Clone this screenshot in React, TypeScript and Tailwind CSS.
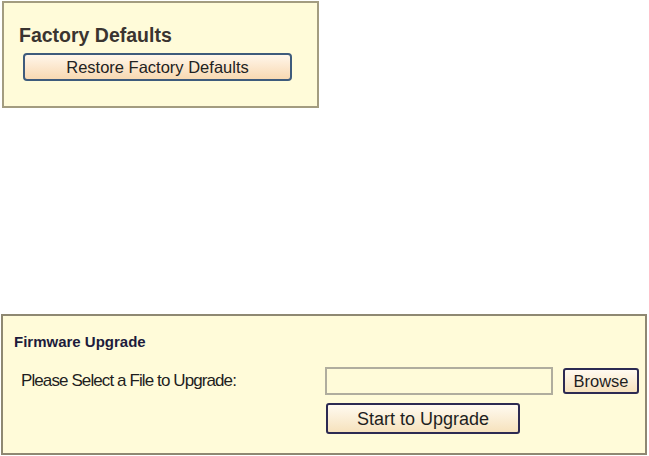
import React from 'react';

// Router admin panels: factory reset and firmware upgrade
const panelBg = 'bg-[#fffbd9]';

const App: React.FC = () => {
  return (
    <div className="w-[649px] h-[456px] bg-white font-['Liberation_Sans',Arial,sans-serif] overflow-hidden">
      {/* Factory Defaults */}
      <div className={`ml-[2px] mt-[1px] w-[317px] h-[107px] border-2 border-[#a39c80] ${panelBg} pl-[15px] pt-[20px]`}>
        <h2 className="text-[19.5px] leading-[24px] font-bold text-[#3a3430]">Factory Defaults</h2>
        <button
          type="button"
          className="mt-[6px] ml-[4px] w-[269px] h-[28px] rounded-[4px] border-2 border-[#3e5b7c] bg-gradient-to-b from-[#fff6ea] to-[#f8d9b2] text-[16.5px] leading-none text-[#222]"
        >
          Restore Factory Defaults
        </button>
      </div>

      {/* Firmware Upgrade */}
      <div className={`ml-[1px] mt-[206px] w-[646px] h-[141px] border-2 border-[#8e8872] ${panelBg} pl-[11px] pt-[15px]`}>
        <h2 className="text-[15px] leading-[22px] font-bold text-[#1d1b3c]">Firmware Upgrade</h2>
        <div className="mt-[14px] flex items-center">
          <span className="w-[311px] pl-[7px] text-[17px] tracking-[-0.9px] text-[#1e1e1e]">
            Please Select a File to Upgrade:
          </span>
          <input
            type="text"
            className={`w-[228px] h-[28px] border-2 border-[#b0ad9e] ${panelBg} outline-none`}
          />
          <button
            type="button"
            className="ml-[10px] w-[76px] h-[26px] rounded-[3px] border-2 border-[#2c2a52] bg-gradient-to-b from-[#fffaf0] to-[#f6e2bd] text-[16.5px] leading-none text-[#1e1e1e]"
          >
            Browse
          </button>
        </div>
        <div className="mt-[8px] pl-[312px]">
          <button
            type="button"
            className="w-[194px] h-[31px] rounded-[3px] border-2 border-[#2c2a52] bg-gradient-to-b from-[#fffaf0] to-[#f6e2bd] text-[18px] leading-none text-[#1e1e1e]"
          >
            Start to Upgrade
          </button>
        </div>
      </div>
    </div>
  );
};

export default App;
